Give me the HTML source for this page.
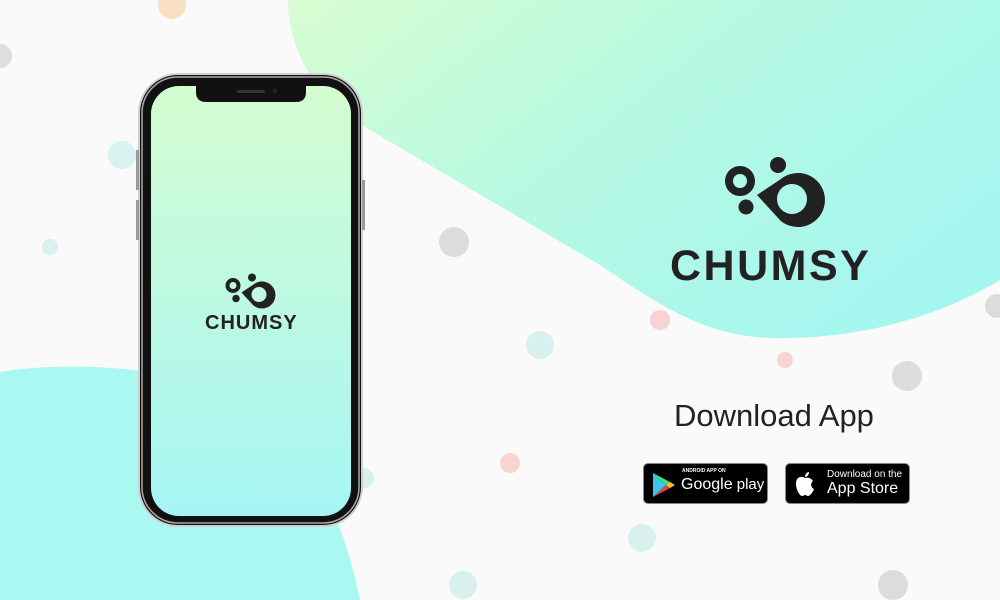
<!DOCTYPE html>
<html><head><meta charset="utf-8"><style>
*{margin:0;padding:0;box-sizing:border-box}
body{width:1000px;height:600px;overflow:hidden;background:#fafafa;position:relative;font-family:"Liberation Sans",sans-serif}
.abs{position:absolute;white-space:nowrap}
.brand{position:absolute;font-weight:bold;color:#222}
.badge{position:absolute;top:463px;height:41px;width:125px;background:#000;border:1px solid #888;border-radius:5px;color:#fff}
</style></head><body>
<svg class="abs" style="left:0;top:0" width="1000" height="600">
<defs>
<linearGradient id="g1" x1="0" y1="0" x2="1" y2="0.6"><stop offset="0" stop-color="#d8fdd0"/><stop offset="0.5" stop-color="#b6f9e2"/><stop offset="1" stop-color="#a6f6f0"/></linearGradient>
<symbol id="logo" viewBox="0 0 106 80">
<circle cx="20" cy="31" r="11" fill="none" stroke="#222" stroke-width="8"/>
<circle cx="58" cy="15" r="8" fill="#222"/>
<circle cx="26" cy="57" r="7.5" fill="#222"/>
<path fill="#222" fill-rule="evenodd" d="M37,45 L60.6,29.3 A27,27 0 1 1 60.6,70.7 Z M57,49 a15,15 0 1 0 30,0 a15,15 0 1 0 -30,0 Z"/>
</symbol>
</defs>
<path d="M288,0 C290,60 320,100 370,130 L600,265 C680,320 720,340 790,338 C880,336 950,310 1000,280 L1000,0 Z" fill="url(#g1)"/>
<path d="M0,372 C60,362 140,365 210,385 C290,410 340,500 360,600 L0,600 Z" fill="#aaf8f2"/>
<g>
<circle cx="172" cy="5" r="14" fill="#f9e0c0"/>
<circle cx="0" cy="56" r="12" fill="#dedede"/>
<circle cx="122" cy="155" r="14" fill="#d9f1ef"/>
<circle cx="50" cy="247" r="8" fill="#d9f1ef"/>
<circle cx="454" cy="242" r="15" fill="#dcdcdc"/>
<circle cx="660" cy="320" r="10" fill="#f9d2d2"/>
<circle cx="540" cy="345" r="14" fill="#d8f0ee"/>
<circle cx="785" cy="360" r="8" fill="#f9d2d2"/>
<circle cx="907" cy="376" r="15" fill="#dcdcdc"/>
<circle cx="997" cy="306" r="12" fill="#dcdcdc"/>
<circle cx="510" cy="463" r="10" fill="#f9d2d2"/>
<circle cx="642" cy="538" r="14" fill="#d8f0ee"/>
<circle cx="463" cy="585" r="14" fill="#d8f0ee"/>
<circle cx="893" cy="585" r="15" fill="#dcdcdc"/>
<circle cx="364" cy="478" r="10" fill="#d8f0ee"/>
</g>
<rect x="138" y="73" width="225" height="454" rx="40" fill="#d0d0d0"/>
<rect x="140" y="75" width="221" height="450" rx="38" fill="#111"/>
<rect x="142" y="77" width="217" height="446" rx="36" fill="none" stroke="#aaa" stroke-width="1.5"/>
<rect x="136" y="150" width="3" height="40" fill="#999"/>
<rect x="136" y="200" width="3" height="40" fill="#999"/>
<rect x="362" y="180" width="3" height="50" fill="#999"/>
<linearGradient id="g2" x1="0" y1="0" x2="0" y2="1"><stop offset="0" stop-color="#d4fdd0"/><stop offset="1" stop-color="#a6f5f5"/></linearGradient>
<rect x="151" y="86" width="200" height="430" rx="28" fill="url(#g2)"/>
<path d="M196,86 L306,86 L306,92 Q306,102 296,102 L206,102 Q196,102 196,92 Z" fill="#111"/>
<rect x="237" y="90" width="28" height="3" rx="1.5" fill="#333"/>
<circle cx="275" cy="91" r="2.5" fill="#223"/>
<use href="#logo" x="223" y="270" width="53" height="40"/>
<use href="#logo" x="720" y="150" width="106" height="80"/>
</svg>
<div class="brand" style="left:205px;top:312px;font-size:20px;letter-spacing:1px">CHUMSY</div>
<div class="brand" style="left:670px;top:242px;font-size:43px;letter-spacing:2.5px">CHUMSY</div>
<div class="abs" style="left:674px;top:398px;font-size:31px;color:#222">Download App</div>
<div class="badge" style="left:643px">
<svg class="abs" style="left:8px;top:8px" width="24" height="26" viewBox="0 0 24 26"><path d="M1,1 L14,13 L1,25 Z" fill="#3bc8e8"/><path d="M1,1 L18,10 L14,13 Z" fill="#3ce37a"/><path d="M1,25 L18,16 L14,13 Z" fill="#ea3e4a"/><path d="M18,10 L23,13 L18,16 L14,13 Z" fill="#fbc02d"/></svg>
<div class="abs" style="left:38px;top:4px;font-size:5px;font-weight:bold">ANDROID APP ON</div>
<div class="abs" style="left:37px;top:12px;font-size:16px">Google<span style="font-size:15px"> play</span></div>
</div>
<div class="badge" style="left:785px">
<svg class="abs" style="left:8px;top:7px" width="22" height="26" viewBox="0 0 22 26"><path d="M11,7 C8,5 2,5 2,13 C2,19 6,25 8,25 C10,25 10,24 11,24 C12,24 13,25 14,25 C16,25 19,21 20,18 C17,17 16,12 19,10 C17,7 14,6 11,7 Z" fill="#fff"/><path d="M11,6 C11,3 13,1 15,1 C15,4 13,6 11,6 Z" fill="#fff"/></svg>
<div class="abs" style="left:41px;top:5px;font-size:10px">Download on the</div>
<div class="abs" style="left:41px;top:16px;font-size:16px">App Store</div>
</div>
</body></html>
